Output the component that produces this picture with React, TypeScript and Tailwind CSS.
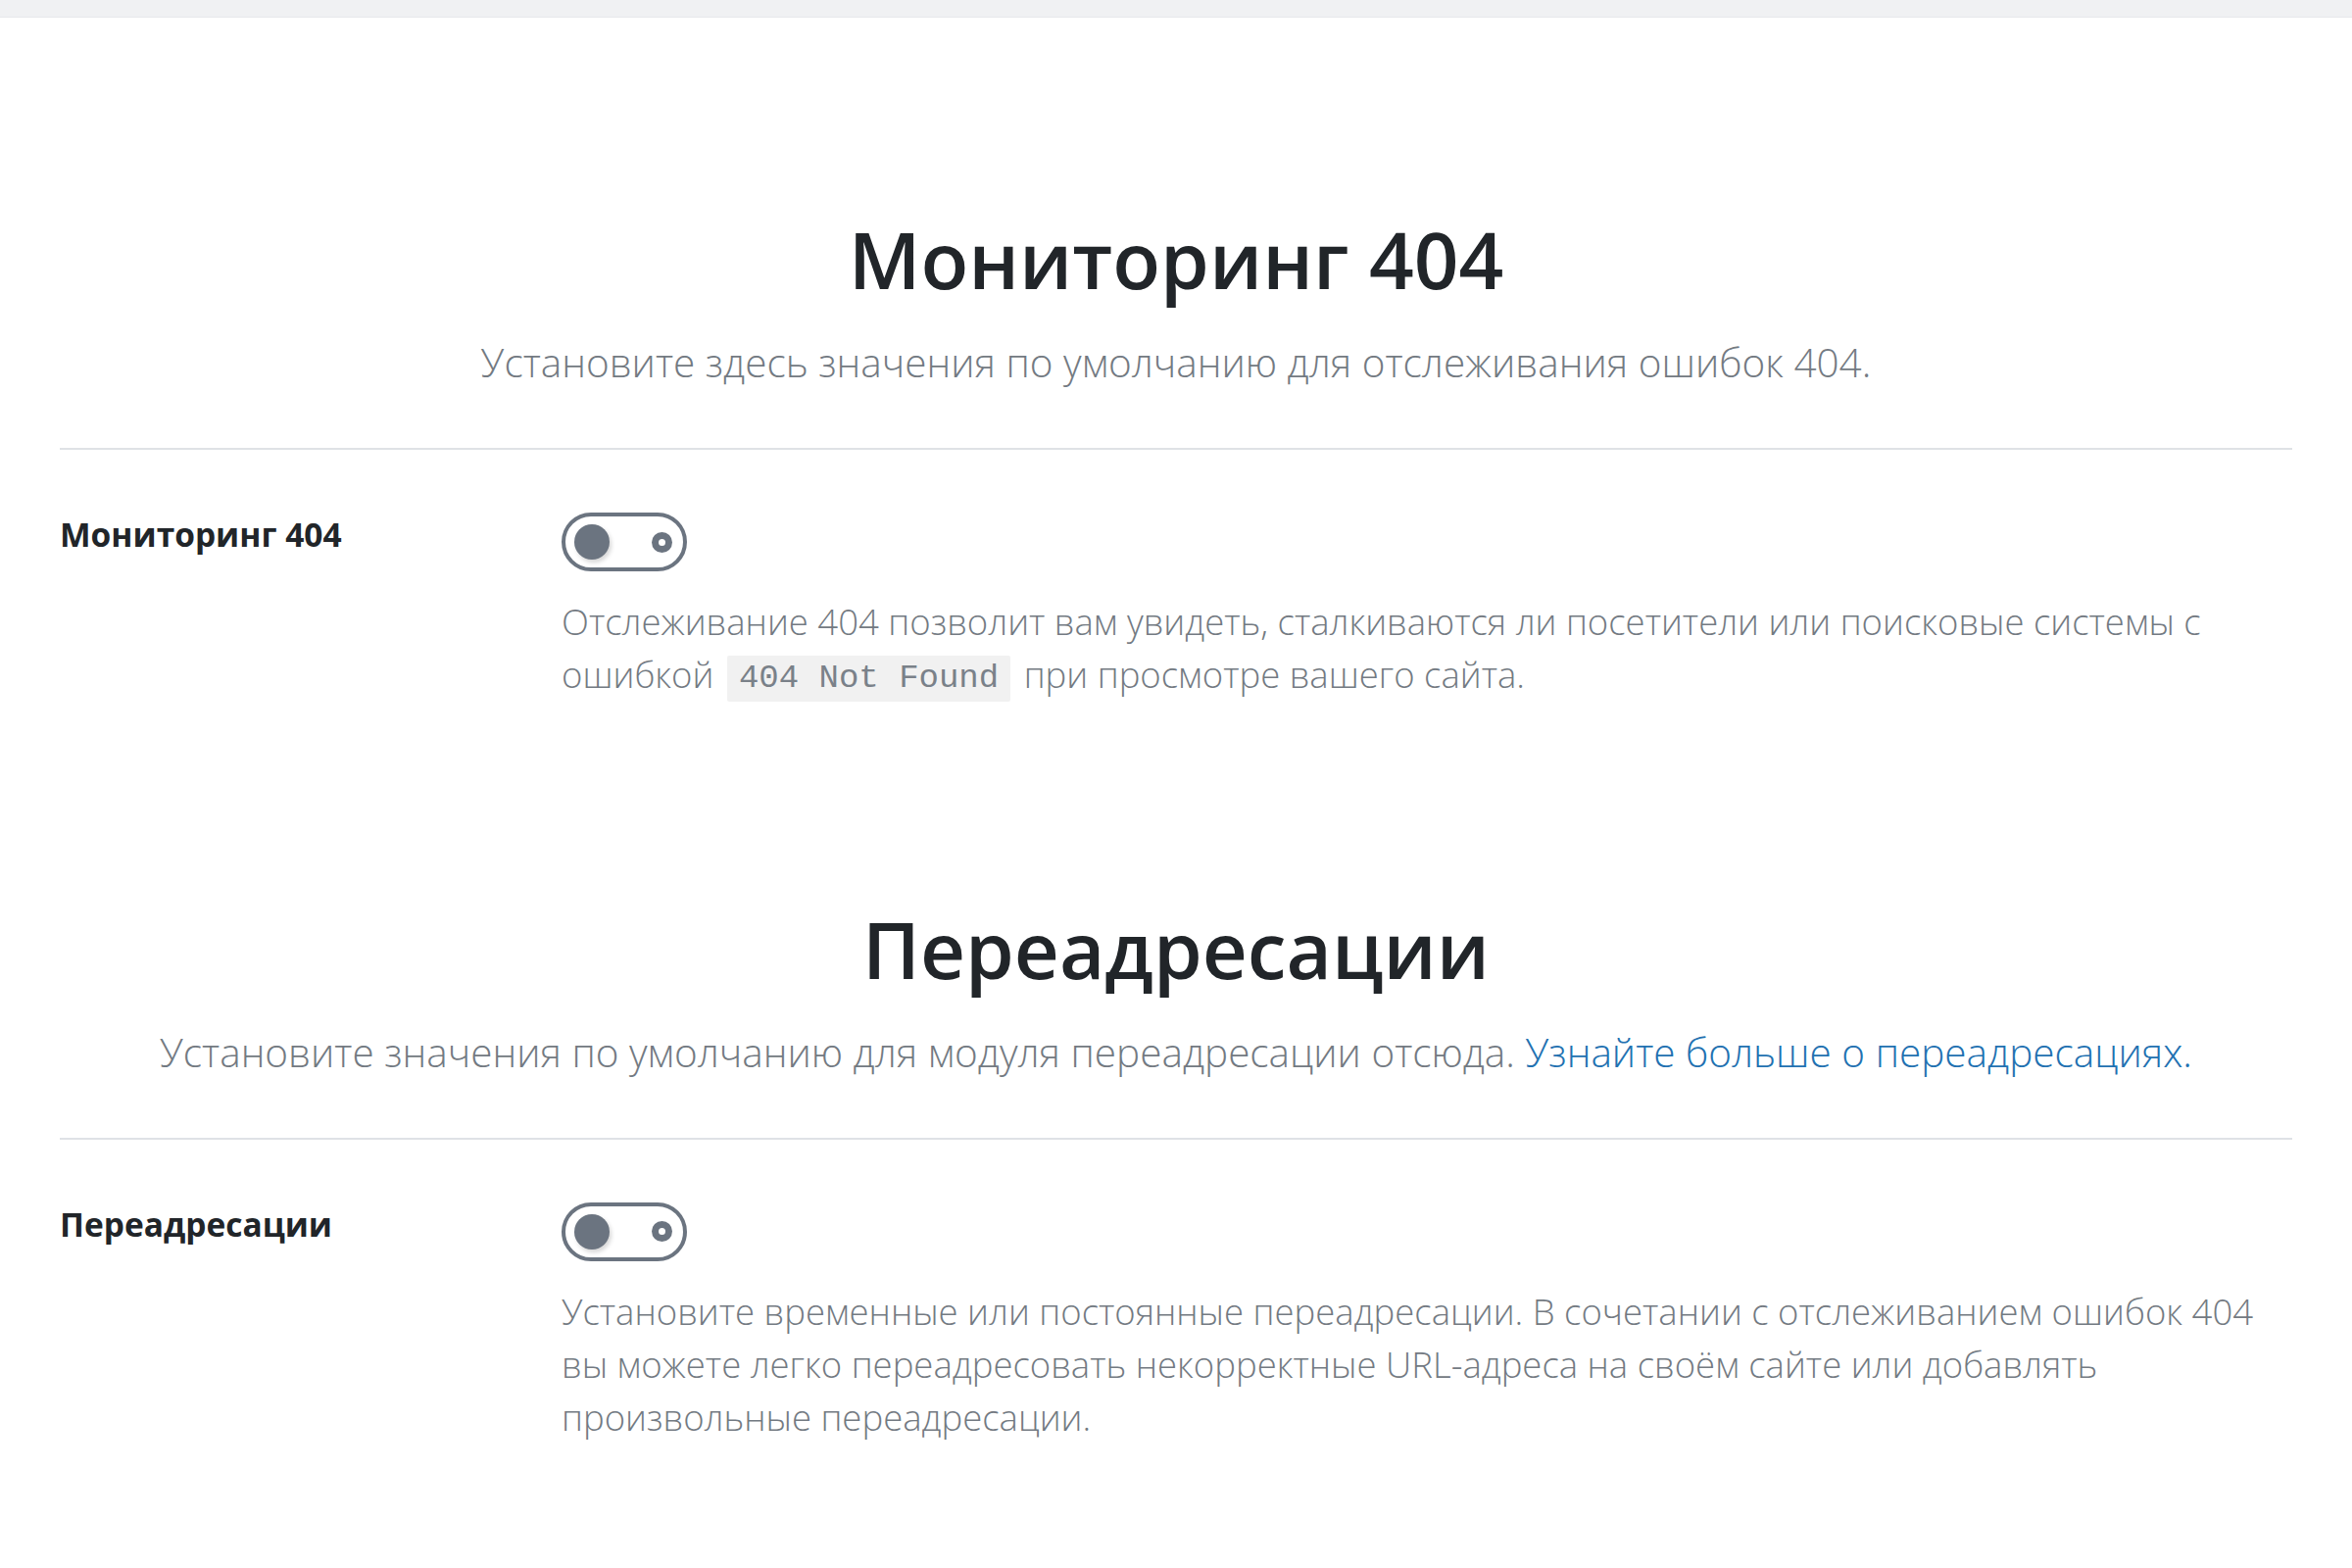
import type { ReactNode } from 'react'

const sans = "font-['Open_Sans','Noto_Sans',sans-serif]"

function Toggle() {
  return (
    <div className="flex h-[60px] w-[128px] items-center justify-between rounded-full border-[4px] border-[#6b7480] bg-white pl-[9px] pr-[11px]">
      <span className="h-[36px] w-[36px] rounded-full bg-[#6b7480] shadow-[2px_3px_4px_rgba(0,0,0,0.16)]" />
      <span className="flex h-[21px] w-[21px] items-center justify-center rounded-full bg-[#6b7480]">
        <span className="h-[7px] w-[7px] rounded-full bg-white" />
      </span>
    </div>
  )
}

function SectionHeader({ title, children }: { title: string; children: ReactNode }) {
  return (
    <header className="text-center">
      <h1 className="text-[80px] leading-[96px] font-semibold text-[#212529]">{title}</h1>
      <p className="mt-[28px] text-[40.5px] leading-[60px] font-light text-[#737a82]">{children}</p>
    </header>
  )
}

function SettingRow({ label, children }: { label: string; children: ReactNode }) {
  return (
    <div className="flex pt-[62px]">
      <div className="w-[512px] shrink-0 text-[33.5px] leading-[48px] font-bold text-[#212529]">{label}</div>
      <div className="flex-1">
        <div className="pt-[2px]">
          <Toggle />
        </div>
        <p className="mt-[24px] text-[36.5px] leading-[54px] font-light text-[#737a82]">{children}</p>
      </div>
    </div>
  )
}

export default function App() {
  return (
    <div className={`min-h-screen bg-white ${sans}`}>
      <div className="h-[18px] border-b border-[#e6e8eb] bg-[#f0f1f3]" />

      <main className="px-[61px] pt-[198px]">
        {/* ── 404 monitor ── */}
        <section>
          <SectionHeader title="Мониторинг 404">
            Установите здесь значения по умолчанию для отслеживания ошибок 404.
          </SectionHeader>
          <hr className="mt-[57px] border-t-2 border-[#dfe2e6]" />
          <SettingRow label="Мониторинг 404">
            Отслеживание 404 позволит вам увидеть, сталкиваются ли посетители или поисковые системы с ошибкой{' '}
            <code className="mx-[4px] inline-block rounded-[2px] bg-[#f1f1f1] px-[12px] align-middle font-['Liberation_Mono',monospace] text-[34px] leading-[47px] font-normal text-[#7a8189]">
              404 Not Found
            </code>{' '}
            при просмотре вашего сайта.
          </SettingRow>
        </section>

        {/* ── Redirections ── */}
        <section className="mt-[204px] pb-[120px]">
          <SectionHeader title="Переадресации">
            Установите значения по умолчанию для модуля переадресации отсюда.{' '}
            <a href="#" className="text-[#2271b1]">
              Узнайте больше о переадресациях.
            </a>
          </SectionHeader>
          <hr className="mt-[57px] border-t-2 border-[#dfe2e6]" />
          <SettingRow label="Переадресации">
            Установите временные или постоянные переадресации. В сочетании с отслеживанием ошибок 404 вы можете
            легко переадресовать некорректные URL-адреса на своём сайте или добавлять произвольные переадресации.
          </SettingRow>
        </section>
      </main>
    </div>
  )
}
